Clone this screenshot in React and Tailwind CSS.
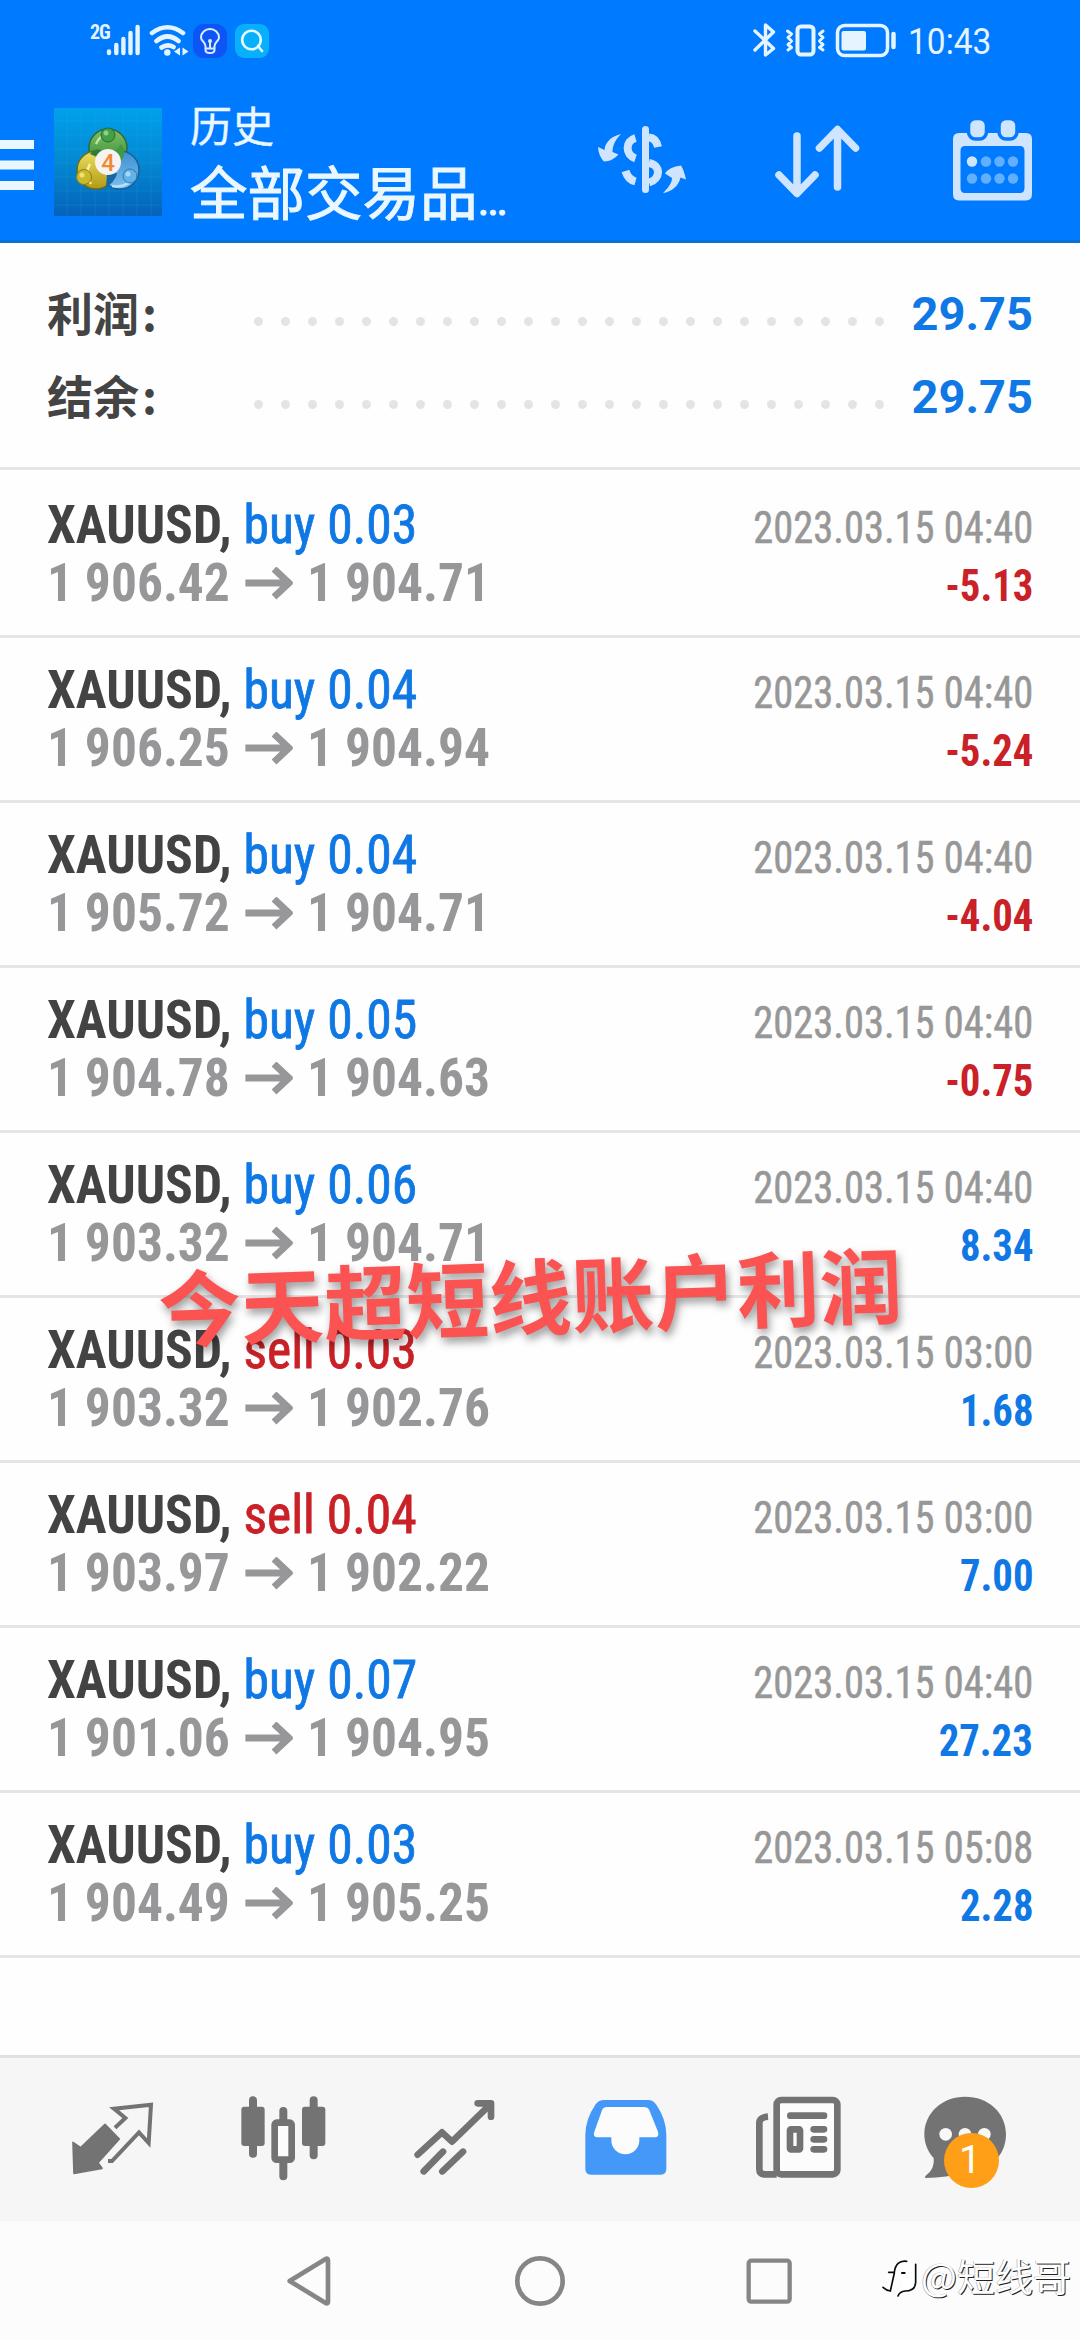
const trades = [
  { side: 'buy', lot: '0.03', from: '1 906.42', to: '1 904.71', time: '2023.03.15 04:40', pl: '-5.13' },
  { side: 'buy', lot: '0.04', from: '1 906.25', to: '1 904.94', time: '2023.03.15 04:40', pl: '-5.24' },
  { side: 'buy', lot: '0.04', from: '1 905.72', to: '1 904.71', time: '2023.03.15 04:40', pl: '-4.04' },
  { side: 'buy', lot: '0.05', from: '1 904.78', to: '1 904.63', time: '2023.03.15 04:40', pl: '-0.75' },
  { side: 'buy', lot: '0.06', from: '1 903.32', to: '1 904.71', time: '2023.03.15 04:40', pl: '8.34' },
  { side: 'sell', lot: '0.03', from: '1 903.32', to: '1 902.76', time: '2023.03.15 03:00', pl: '1.68' },
  { side: 'sell', lot: '0.04', from: '1 903.97', to: '1 902.22', time: '2023.03.15 03:00', pl: '7.00' },
  { side: 'buy', lot: '0.07', from: '1 901.06', to: '1 904.95', time: '2023.03.15 04:40', pl: '27.23' },
  { side: 'buy', lot: '0.03', from: '1 904.49', to: '1 905.25', time: '2023.03.15 05:08', pl: '2.28' },
];

function StatusBar() {
  return (
    <div className="flex h-20 items-center text-[#e6f4ff]">
      <span className="ml-[90px] w-4 self-start pt-[21px] font-['Roboto_Condensed'] text-[20px] leading-[22px] font-bold tracking-[-1px]">2G</span>
      <svg className="h-10 w-9" viewBox="106 20 36 40" stroke="currentColor" strokeWidth="4.4" strokeLinecap="round">
        <path d="M109 51.5V53M116.300 45V53M123.400 39V53M130.500 33V53M137.600 27V53" />
      </svg>
      <svg className="ml-[6px] h-10 w-[42px]" viewBox="148 20 42 40" fill="none" stroke="currentColor" strokeWidth="4.6" strokeLinecap="round">
        <path d="M152 33Q167.500 21.500 183 33M156.500 41Q167.500 32 178.500 41M161.500 47.500Q167.500 43.500 173.500 47" />
        <circle cx="167.300" cy="52.500" r="3.200" fill="currentColor" stroke="none" />
        <path d="M180 47.500V55.500L174 51.500ZM182.500 47.500V55.500L188.500 51.500Z" fill="currentColor" stroke="none" />
      </svg>
      <svg className="ml-[3px] h-10 w-[34px]" viewBox="193 20 34 40" fill="none">
        <rect x="193" y="24" width="34" height="34" rx="11" fill="#0d55f5" />
        <path d="M205.500 46C205.500 42 201 41 201 37.500A9 8.500 0 0 1 219 37.500C219 41 214.500 42 214.500 46V50Q214.500 53 210 53T205.500 50ZM205.500 48.500H214.500M210 48V41" stroke="#dcecff" strokeWidth="2" />
        <circle cx="210" cy="41" r="2" fill="#dcecff" />
      </svg>
      <svg className="ml-2 h-10 w-[34px]" viewBox="235 20 34 40" fill="none" stroke="#e6fbff" strokeWidth="2.600" strokeLinecap="round">
        <rect x="235" y="24" width="34" height="34" rx="9" fill="#08b0fb" stroke="none" />
        <circle cx="251.500" cy="40" r="9.300" />
        <path d="M258 46L262 51" />
      </svg>
      <div className="flex-1" />
      <svg className="h-10 w-[76px]" viewBox="750 20 76 40" fill="none" stroke="currentColor" strokeLinecap="round" strokeLinejoin="round">
        <path d="M754 31L772.500 48.500L764.500 55V25L772.500 32L754 50" strokeWidth="3.400" />
        <rect x="796.500" y="26.500" width="16" height="28" rx="3.500" strokeWidth="4" />
        <path d="M786.500 31L790.500 34L787 37.500L790.500 41L787 44.500L790.500 47.500L787 50M822 31L818.500 34L822 37.500L818.500 41L822 44.500L818.500 47.500L822 50" strokeWidth="3" />
      </svg>
      <svg className="ml-2 h-10 w-[62px]" viewBox="834 20 62 40" fill="none" stroke="currentColor" strokeWidth="3.500">
        <rect x="836.500" y="25.500" width="50" height="30" rx="7" />
        <rect x="840.500" y="31" width="24.500" height="19.500" rx="2" fill="currentColor" stroke="none" />
        <path d="M892.500 34V47" strokeWidth="4.500" strokeLinecap="round" />
      </svg>
      <span className="ml-[11px] mr-[86px] w-[86px] origin-left scale-x-[0.93] pt-[3px] font-['Roboto'] text-[36px] leading-10 whitespace-nowrap">10:43</span>
    </div>
  );
}

function AppLogo() {
  return (
    <svg className="mt-[3px] ml-[20px] h-[108px] w-[108px] shrink-0" viewBox="0 0 108 108">
      <defs>
        <linearGradient id="tile" x1="0" y1="0" x2="0" y2="1">
          <stop offset="0" stopColor="#00a0ec" /><stop offset="0.500" stopColor="#0488d2" /><stop offset="1" stopColor="#0562b8" />
        </linearGradient>
        <linearGradient id="green" x1="0" y1="0" x2="0" y2="1"><stop offset="0" stopColor="#83bf63" /><stop offset="1" stopColor="#2b8a35" /></linearGradient>
        <linearGradient id="yellow" x1="0" y1="0" x2="0" y2="1"><stop offset="0" stopColor="#eadf62" /><stop offset="1" stopColor="#b39a14" /></linearGradient>
        <linearGradient id="sky" x1="0" y1="0" x2="0" y2="1"><stop offset="0" stopColor="#3c8fd0" /><stop offset="1" stopColor="#7cc0ec" /></linearGradient>
      </defs>
      <rect width="108" height="108" fill="url(#tile)" />
      <path d="M13 0V108M27 0V108M41 0V108M55 0V108M69 0V108M83 0V108M97 0V108M0 13H108M0 27H108M0 41H108M0 55H108M0 69H108M0 83H108M0 97H108" stroke="#32b0f0" strokeOpacity="0.180" />
      <g strokeWidth="1.500">
        <circle cx="54" cy="40" r="19" fill="url(#green)" stroke="#2f6b33" />
        <circle cx="66" cy="62" r="19" fill="url(#sky)" stroke="#1b5f98" />
        <circle cx="42" cy="62" r="19" fill="url(#yellow)" stroke="#6d6c18" />
        <path d="M54 54L52 79Q60 75 63 66Z" fill="#1467a8" />
        <path d="M54 54L36 46Q40 40 47 42Z" fill="#2c7d38" />
        <path d="M54 54L67 36Q73 44 68 52Z" fill="#3f9a45" />
        <path d="M37 76Q30 66 36 56" fill="none" stroke="#f7f0a0" strokeWidth="2.500" />
        <path d="M58 78Q70 80 78 72" fill="none" stroke="#b5e0fa" strokeWidth="2.500" />
        <path d="M42 36Q46 27 54 26" fill="none" stroke="#bfe3a0" strokeWidth="2.500" />
      </g>
      <circle cx="54" cy="27" r="7" fill="#43a047" stroke="#276b30" />
      <circle cx="30" cy="69" r="7.500" fill="#cbb92b" stroke="#8b801a" />
      <circle cx="76" cy="68" r="7" fill="#62b2ea" stroke="#2c79b0" />
      <circle cx="52" cy="25" r="2.500" fill="#8ed08c" />
      <circle cx="28" cy="67" r="2.500" fill="#ece17c" />
      <circle cx="74" cy="66" r="2.500" fill="#a6d8f7" />
      <circle cx="54" cy="54" r="13" fill="#f6f3f2" />
      <text x="54" y="62.500" textAnchor="middle" fontFamily="Roboto" fontWeight="500" fontSize="24" fill="#f08a35">4</text>
    </svg>
  );
}

function TitleBar() {
  return (
    <div className="flex h-40 items-center text-[#eaf7ff]">
      <svg className="mt-[9px] h-[50px] w-[34px] shrink-0" viewBox="0 0 34 50">
        <path d="M0 0H34V9H0ZM0 20.500H34V29.500H0ZM0 41H34V50H0Z" fill="currentColor" />
      </svg>
      <AppLogo />
      <div className="mt-[13px] ml-[28px] w-[400px] font-['Noto_Sans_CJK_SC'] whitespace-nowrap">
        <div className="text-[42px] leading-[56px] [-webkit-text-stroke:0.4px_#eaf7ff]">历史</div>
        <div className="text-[57.5px] leading-[76px] [-webkit-text-stroke:1px_#eaf7ff]">全部交易品<span className="font-['Roboto'] text-[45px]">…</span></div>
      </div>
      <svg className="h-[100px] w-[110px]" viewBox="0 0 110 100" fill="none" stroke="#cfe5ff" strokeWidth="8">
        <path d="M31 24C22 26 15 32 14.500 40L8 37Q8.500 46 14 51.500Q23 51 28.500 44.500L22.500 42C22.500 35 26 29 31 24Z" fill="#cfe5ff" stroke="none" />
        <path d="M73 83C78 78 82 73 82 68L75 63.500Q79 57 91 55.500Q94 60 96 69.500L90.500 67.500C89 76 81 82 73 83Z" fill="#cfe5ff" stroke="none" />
        <path d="M45.500 28C35 31 35 45 45.500 48.500M45.500 71.500Q38 69.500 35.500 61M59 27.500Q66 28 68 37M59 53C71 55 71 69 59 72.500" />
        <path d="M55.500 19.500V79.500" strokeWidth="7" strokeLinecap="round" />
      </svg>
      <svg className="ml-[65px] h-[100px] w-[100px]" viewBox="765 110 100 100" fill="none" stroke="#cfe5ff" strokeWidth="7.500" strokeLinecap="round" strokeLinejoin="round">
        <path d="M797 136V192M779 175L797 193.500L815 175M837.500 187V130M819.500 148L837.500 129.500L855.500 148" />
      </svg>
      <svg className="ml-[78px] h-[100px] w-[100px]" viewBox="943 110 100 100" fill="#cfe5ff">
        <path fillRule="evenodd" d="M959 133H1026Q1032 133 1032 139V194Q1032 200.500 1026 200.500H959Q953 200.500 953 194V139Q953 133 959 133ZM965 146Q960.500 146 960.500 151V188Q960.500 193 965 193H1020Q1024.500 193 1024.500 188V151Q1024.500 146 1020 146Z" />
        <rect x="968.500" y="118.500" width="18" height="20.500" rx="7" stroke="#007aff" strokeWidth="3.500" />
        <rect x="999" y="118.500" width="18" height="20.500" rx="7" stroke="#007aff" strokeWidth="3.500" />
        <circle cx="972" cy="161.500" r="5.200" />
        <g fill="#62aeff">
          <circle cx="986" cy="161.500" r="5.200" /><circle cx="999.500" cy="161.500" r="5.200" /><circle cx="1013" cy="161.500" r="5.200" />
          <circle cx="972" cy="178.500" r="5.200" /><circle cx="986" cy="178.500" r="5.200" /><circle cx="999.500" cy="178.500" r="5.200" /><circle cx="1013" cy="178.500" r="5.200" />
        </g>
      </svg>
    </div>
  );
}

function SummaryRow({ label, value }) {
  return (
    <div className="flex h-[83px] items-center">
      <span className="-mt-[6px] w-[207px] font-['Noto_Sans_CJK_SC'] text-[46px] leading-[60px] font-bold text-[#444444]">{label}<span className="ml-[3px]">:</span></span>
      <div className="mt-[16px] flex w-[630px] justify-between">
        {Array.from({ length: 24 }, (_, i) => <i key={i} className="size-[9px] rounded-full bg-[#e4e4e4]" />)}
      </div>
      <span className="flex-1 text-right font-['Roboto'] text-[47px] leading-[60px] font-bold text-[#0f78e4]">{value}</span>
    </div>
  );
}

function TradeRow({ t }) {
  return (
    <div className="h-[165px] border-b-[3px] border-[#e5e5e5] pl-[47px] pr-[47px] pt-6 font-['Roboto_Condensed'] whitespace-nowrap">
      <div className="flex h-[54px] items-baseline justify-between leading-[55px]">
        <span className="origin-left scale-x-[0.955] text-[54px]">
          <b className="font-bold text-[#434343]">XAUUSD, </b>
          <span className={t.side === 'buy' ? 'text-[#0f78e4] [-webkit-text-stroke:0.8px_#0f78e4]' : 'text-[#c92127] [-webkit-text-stroke:0.8px_#c92127]'}>{t.side} {t.lot}</span>
        </span>
        <span className="origin-right scale-x-[0.92] text-[44px] text-[#979797] [-webkit-text-stroke:0.5px_#979797]">{t.time}</span>
      </div>
      <div className="flex items-baseline justify-between leading-[64px]">
        <span className="flex origin-left scale-x-[0.953] items-baseline text-[54px] font-bold text-[#97979a]">
          <span>{t.from}</span>
          <svg className="ml-4 mr-[15px] h-[34px] w-[50px]" viewBox="0 0 48 34" preserveAspectRatio="none" fill="none" stroke="currentColor" strokeWidth="7">
            <path d="M0 16H44M29 2L44 16L29 30" />
          </svg>
          <span>{t.to}</span>
        </span>
        <span className={t.pl[0] === '-' ? 'origin-right scale-x-[0.925] text-[44px] font-bold text-[#c92127]' : 'origin-right scale-x-[0.925] text-[44px] font-bold text-[#0f78e4]'}>{t.pl}</span>
      </div>
    </div>
  );
}

const icon = 'size-[100px]';

function TabBar() {
  return (
    <nav className="grid h-[166px] grid-cols-6 place-items-center border-t-[3px] border-[#e0e0e0] bg-[#f6f6f6] px-[27.5px] text-[#737373]">
      <svg className={icon} viewBox="189 147 300 300" fill="none" stroke="currentColor" strokeLinejoin="round">
        <path d="M315 250L358 294L294 365L306 382L222 397L219 304L242 320Z" fill="currentColor" strokeWidth="5" />
        <path d="M345 260L376 231L342 203L453 191L446 306L417 274L336 360H324" strokeWidth="12" strokeLinejoin="miter" />
      </svg>
      <svg className={icon} viewBox="701 147 300 300" fill="none" stroke="currentColor" strokeLinecap="round">
        <path d="M758 178V338M940 178V343M849 210V240M849 362V406" strokeWidth="24" />
        <rect x="723" y="197" width="70" height="118" rx="9" fill="currentColor" stroke="none" />
        <rect x="905" y="197" width="70" height="118" rx="9" fill="currentColor" stroke="none" />
        <rect x="823" y="245" width="51" height="111" rx="6" strokeWidth="20" fill="#fcfcfc" />
      </svg>
      <svg className={icon} viewBox="134 147 300 300" fill="none" stroke="currentColor" strokeWidth="20" strokeLinecap="round" strokeLinejoin="round">
        <path d="M172 341L245 274L275 302L390 190M352 187H392V227M190 391L248 332M246 391L308 332" />
      </svg>
      <svg className={icon} viewBox="646 147 300 300">
        <path d="M733 177H865Q880 177 889 190Q920 235 920 282V384Q920 401 903 401H694Q677 401 677 384V282Q677 235 708 190Q717 177 733 177Z" fill="#4499f8" />
        <path d="M742 198H853Q864 198 869 208L895 272Q900 289 885 289H839V298A42 42 0 0 1 755 298V289H715Q698 289 704 272L727 208Q731 198 742 198Z" fill="#fcfcfc" />
      </svg>
      <svg className={icon} viewBox="79 147 300 300" fill="none" stroke="currentColor" strokeWidth="20" strokeLinecap="round">
        <rect x="171" y="177" width="182" height="223" rx="14" fill="#fcfcfc" />
        <path d="M145 227Q119 229 119 246V384Q119 400 135 400H171" strokeLinecap="butt" />
        <path d="M212 224H313M282 265H313M282 295H313M282 325H313" />
        <rect x="211" y="265" width="30" height="60" rx="3" />
      </svg>
      <div className="relative">
        <svg className={icon} viewBox="591 147 300 300" fill="currentColor">
          <path d="M735 167C805 167 858 215 858 280C858 350 800 394 735 394Q680 411 617 411Q612 408 617 404Q645 385 641 351C622 332 613 305 613 280C613 215 668 167 735 167Z" />
          <circle cx="677" cy="280" r="19" fill="#f8f8f8" /><circle cx="735" cy="280" r="19" fill="#f8f8f8" /><circle cx="793" cy="280" r="19" fill="#f8f8f8" />
        </svg>
        <span className="absolute left-[27px] top-[43px] flex size-[55px] items-center justify-center rounded-full bg-[#ff9f17] pr-[3px] font-['Roboto'] text-[39px] leading-none text-white">1</span>
      </div>
    </nav>
  );
}

function SystemBar() {
  const cls = 'size-14';
  return (
    <div className="relative flex h-[119px] items-center justify-center gap-[173px] bg-[#fcfcfc] text-[#868686]">
      <svg className={cls} viewBox="849 636 168 168" fill="none" stroke="currentColor" strokeWidth="14" strokeLinejoin="round">
        <path d="M869 720L977 654Q984 651 984 658V782Q984 789 977 786Z" />
      </svg>
      <svg className={cls} viewBox="456 636 168 168" fill="none" stroke="currentColor" strokeWidth="14"><circle cx="540" cy="720" r="68" /></svg>
      <svg className={cls} viewBox="63 636 168 168" fill="none" stroke="currentColor" strokeWidth="13"><rect x="86" y="659" width="123" height="123" rx="8" /></svg>
      <div className="absolute right-[9px] top-[27px] flex items-center text-white">
        <svg className="mt-[4px] h-[44px] w-[40px]" viewBox="25 50 120 132" fill="none" strokeLinecap="round">
          <path d="M38 120L48 100L70 72L110 66L130 90L128 140L100 160L80 170L90 130L60 110L54 155Z" fill="#ffffff" />
          <path d="M102 69C80 66 68 78 65 102H48M65 104L53 158Q42 157 31 147M129 78V132Q128 158 98 158Q80 160 76 173" stroke="#0a0a0a" strokeWidth="5" />
          <path d="M88 104H96" stroke="#0a0a0a" strokeWidth="6" />
        </svg>
        <span className="font-['Noto_Sans_CJK_SC'] text-[38px] leading-[54px] whitespace-nowrap [text-shadow:1px_1px_0_#222222,-0.5px_-0.5px_0_#999999]">@短线哥</span>
      </div>
    </div>
  );
}

export default function App() {
  return (
    <div className="relative flex h-[2340px] w-[1080px] flex-col overflow-hidden bg-[#fefefe]">
      <header className="h-[243px] border-b-[3px] border-[#0c6fd6] bg-[#007aff]">
        <StatusBar />
        <TitleBar />
      </header>
      <section className="h-[227px] border-b-[3px] border-[#e5e5e5] pl-[47px] pr-[47px] pt-[29px]">
        <SummaryRow label="利润" value="29.75" />
        <SummaryRow label="结余" value="29.75" />
      </section>
      <main className="flex-1 pt-[3px]">
        {trades.map((t, i) => <TradeRow key={i} t={t} />)}
      </main>
      <TabBar />
      <SystemBar />
      <div className="absolute left-[158px] top-[1238px] rotate-[-1.9deg] font-['Noto_Sans_CJK_SC'] text-[82.700px] leading-[110px] font-bold whitespace-nowrap text-[#fb5252] [text-shadow:2px_5px_8px_rgba(0,0,0,0.4)]">今天超短线账户利润</div>
    </div>
  );
}
